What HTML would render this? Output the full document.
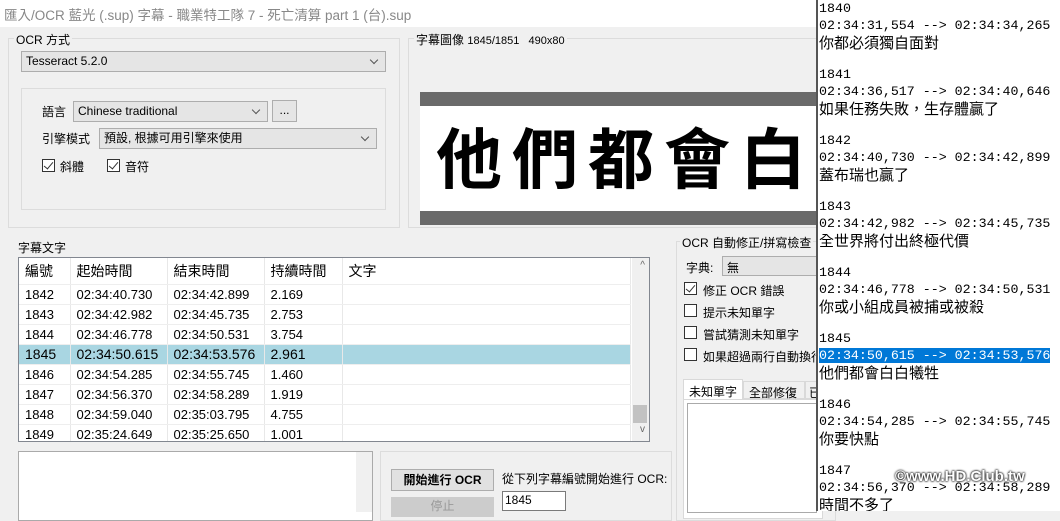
<!DOCTYPE html>
<html><head><meta charset="utf-8"><style>
*{box-sizing:border-box;margin:0;padding:0}
body{width:1060px;height:511px;overflow:hidden;background:#f0f0f0;position:relative;font-family:"Liberation Sans","Noto Sans CJK TC",sans-serif;font-size:12px;color:#000}
.a{position:absolute;white-space:nowrap}
.grp{position:absolute;border:1px solid #dcdcdc}
.lbl{position:absolute;background:#f0f0f0;padding:0 2px;font-size:12px}
.cb{position:absolute;background:#e5e5e5;border:1px solid #adadad;font-size:12px;padding:2px 4px;line-height:14px}
.cb:after{content:"";position:absolute;right:8px;top:5px;width:5px;height:5px;border-right:1px solid #555;border-bottom:1px solid #555;transform:rotate(45deg)}
.chk{position:absolute;width:13px;height:13px;border:1px solid #333;background:#fff}
.chk.on:after{content:"";position:absolute;left:3px;top:0px;width:4px;height:8px;border-right:1.5px solid #333;border-bottom:1.5px solid #333;transform:rotate(40deg)}
table{border-collapse:collapse}
.lst td{height:20px;font-size:13px;padding-left:6px;border-right:1px solid #e8e8e8;border-bottom:1px solid #eee;font-family:"Liberation Sans","Noto Sans CJK TC",sans-serif}
.mono{font-family:"Liberation Mono","Noto Sans CJK TC",monospace;font-size:13.3px;line-height:16.5px}
.rt div{height:16.5px;white-space:nowrap}
.rt .c{font-family:"Liberation Sans","Noto Sans CJK TC",sans-serif;font-size:15px;line-height:19px}
</style></head><body>
<div class="a" style="left:0;top:0;width:816px;height:27px;background:#fff"></div>
<div class="a" style="left:4px;top:4px;font-size:13.5px;color:#888">匯入/OCR 藍光 (.sup) 字幕 - 職業特工隊 7 - 死亡清算 part 1 (台).sup</div>

<div class="grp" style="left:8px;top:38px;width:392px;height:190px"></div>
<div class="lbl" style="left:14px;top:31px">OCR 方式</div>
<div class="cb" style="left:21px;top:51px;width:365px;height:21px">Tesseract 5.2.0</div>
<div class="grp" style="left:21px;top:88px;width:365px;height:122px"></div>
<div class="a" style="left:42px;top:103px;font-size:12px">語言</div>
<div class="cb" style="left:73px;top:101px;width:195px;height:21px">Chinese traditional</div>
<div class="a" style="left:272px;top:100px;width:25px;height:22px;background:#e5e5e5;border:1px solid #adadad;text-align:center;line-height:18px">...</div>
<div class="a" style="left:42px;top:130px">引擎模式</div>
<div class="cb" style="left:99px;top:128px;width:278px;height:21px">預設, 根據可用引擎來使用</div>
<div class="chk on" style="left:42px;top:159px"></div><div class="a" style="left:60px;top:158px">斜體</div>
<div class="chk on" style="left:107px;top:159px"></div><div class="a" style="left:125px;top:158px">音符</div>

<div class="grp" style="left:408px;top:38px;width:420px;height:190px"></div>
<div class="lbl" style="left:414px;top:31px">字幕圖像 <span style="font-size:11px">1845/1851 &nbsp; 490x80</span></div>
<div class="a" style="left:420px;top:92px;width:396px;height:133px;background:#fff;border-top:14px solid #6a6a6a;border-bottom:14px solid #6a6a6a"></div>
<div class="a" style="left:436px;top:110px;font-size:66px;font-weight:bold;line-height:90px;font-family:'Noto Sans CJK TC',sans-serif;letter-spacing:10px;width:380px;overflow:hidden">他們都會白</div>

<div class="a" style="left:18px;top:239px">字幕文字</div>
<div class="a" style="left:18px;top:257px;width:632px;height:185px;background:#fff;border:1px solid #828790;overflow:hidden">
<table class="lst" style="width:612px">
<tr style="height:26px"><td style="width:51px;font-size:14px;height:26px">編號</td><td style="width:97px;font-size:14px">起始時間</td><td style="width:97px;font-size:14px">結束時間</td><td style="width:78px;font-size:14px">持續時間</td><td style="font-size:14px">文字</td></tr>
<tr><td>1842</td><td>02:34:40.730</td><td>02:34:42.899</td><td>2.169</td><td></td></tr>
<tr><td>1843</td><td>02:34:42.982</td><td>02:34:45.735</td><td>2.753</td><td></td></tr>
<tr><td>1844</td><td>02:34:46.778</td><td>02:34:50.531</td><td>3.754</td><td></td></tr>
<tr style="background:#a9d6e2;font-size:14px"><td style="font-size:14px">1845</td><td style="font-size:14px">02:34:50.615</td><td style="font-size:14px">02:34:53.576</td><td style="font-size:14px">2.961</td><td></td></tr>
<tr><td>1846</td><td>02:34:54.285</td><td>02:34:55.745</td><td>1.460</td><td></td></tr>
<tr><td>1847</td><td>02:34:56.370</td><td>02:34:58.289</td><td>1.919</td><td></td></tr>
<tr><td>1848</td><td>02:34:59.040</td><td>02:35:03.795</td><td>4.755</td><td></td></tr>
<tr><td>1849</td><td>02:35:24.649</td><td>02:35:25.650</td><td>1.001</td><td></td></tr>
</table>
<div class="a" style="right:0;top:0;width:17px;height:183px;background:#f0f0f0"></div>
<div class="a" style="right:2px;top:147px;width:14px;height:18px;background:#c2c2c2"></div>
<div class="a" style="right:4px;top:2px;color:#666;font-size:10px">^</div>
<div class="a" style="right:4px;top:166px;color:#666;font-size:10px">v</div>
</div>

<div class="a" style="left:18px;top:451px;width:355px;height:70px;background:#fff;border:1px solid #aaa"></div>
<div class="a" style="left:356px;top:452px;width:16px;height:60px;background:#f0f0f0"></div>
<div class="grp" style="left:380px;top:451px;width:292px;height:70px"></div>
<div class="a" style="left:391px;top:469px;width:103px;height:22px;background:#e1e1e1;border:1px solid #adadad;text-align:center;line-height:20px;font-weight:bold">開始進行 OCR</div>
<div class="a" style="left:391px;top:497px;width:103px;height:20px;background:#ccc;color:#999;text-align:center">停止</div>
<div class="a" style="left:502px;top:470px">從下列字幕編號開始進行 OCR:</div>
<div class="a" style="left:502px;top:491px;width:64px;height:20px;background:#fff;border:1px solid #7a7a7a;padding-left:2px;line-height:16px">1845</div>

<div class="grp" style="left:676px;top:241px;width:160px;height:280px"></div>
<div class="lbl" style="left:680px;top:234px">OCR 自動修正/拼寫檢查</div>
<div class="a" style="left:686px;top:259px">字典:</div>
<div class="a" style="left:722px;top:256px;width:100px;height:20px;background:#e5e5e5;border:1px solid #adadad;padding:2px 4px">無</div>
<div class="chk on" style="left:684px;top:282px"></div><div class="a" style="left:703px;top:282px">修正 OCR 錯誤</div>
<div class="chk" style="left:684px;top:304px"></div><div class="a" style="left:703px;top:304px">提示未知單字</div>
<div class="chk" style="left:684px;top:326px"></div><div class="a" style="left:703px;top:326px">嘗試猜測未知單字</div>
<div class="chk" style="left:684px;top:348px"></div><div class="a" style="left:703px;top:348px">如果超過兩行自動換行</div>
<div class="a" style="left:683px;top:379px;width:60px;height:21px;background:#fff;border:1px solid #d9d9d9;border-bottom:none;padding:3px 5px">未知單字</div>
<div class="a" style="left:743px;top:381px;width:62px;height:18px;border:1px solid #d9d9d9;padding:2px 5px">全部修復</div>
<div class="a" style="left:805px;top:381px;width:20px;height:18px;border:1px solid #d9d9d9;padding:2px 3px">已</div>
<div class="a" style="left:683px;top:399px;width:140px;height:120px;background:#fff;border:1px solid #d9d9d9"></div>
<div class="a" style="left:687px;top:403px;width:130px;height:110px;background:#fff;border:1px solid #aaa"></div>

<div class="a mono rt" style="left:816px;top:0;width:244px;height:511px;background:#fff;border-left:2px solid #555;padding-left:1px;padding-top:1px;overflow:hidden">
<div>1840</div><div>02:34:31,554 --&gt; 02:34:34,265</div><div class="c">你都必須獨自面對</div><div></div>
<div>1841</div><div>02:34:36,517 --&gt; 02:34:40,646</div><div class="c">如果任務失敗，生存體贏了</div><div></div>
<div>1842</div><div>02:34:40,730 --&gt; 02:34:42,899</div><div class="c">蓋布瑞也贏了</div><div></div>
<div>1843</div><div>02:34:42,982 --&gt; 02:34:45,735</div><div class="c">全世界將付出終極代價</div><div></div>
<div>1844</div><div>02:34:46,778 --&gt; 02:34:50,531</div><div class="c">你或小組成員被捕或被殺</div><div></div>
<div>1845</div><div><span style="background:#0078d7;color:#fff">02:34:50,615 --&gt; 02:34:53,576</span></div><div class="c">他們都會白白犧牲</div><div></div>
<div>1846</div><div>02:34:54,285 --&gt; 02:34:55,745</div><div class="c">你要快點</div><div></div>
<div>1847</div><div>02:34:56,370 --&gt; 02:34:58,289</div><div class="c">時間不多了</div>
</div>
<div class="a" style="left:895px;top:468px;font-size:15px;font-weight:bold;color:#fff;text-shadow:0 0 2px #000,0 0 2px #000">©www.HD.Club.tw</div>
</body></html>
